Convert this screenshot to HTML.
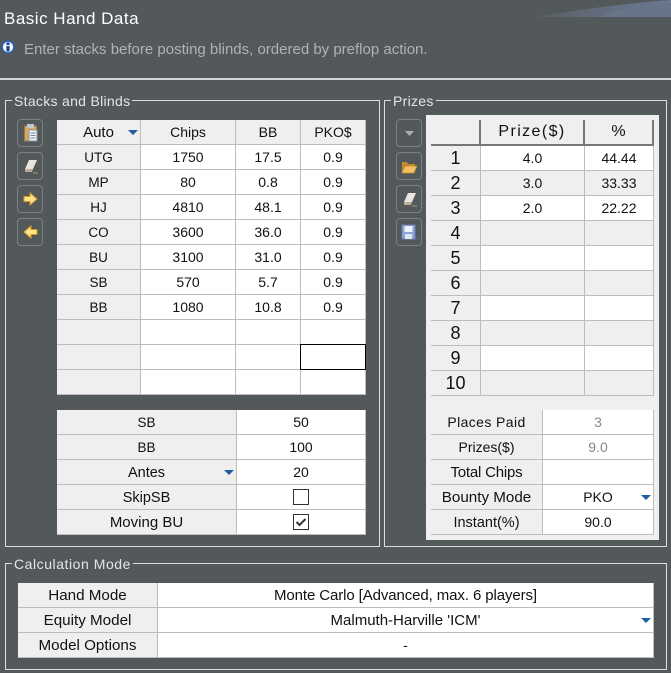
<!DOCTYPE html>
<html><head><meta charset="utf-8"><style>
*{box-sizing:border-box}
html,body{margin:0;padding:0}
body{width:671px;height:673px;background:#53585a;position:relative;overflow:hidden;font-family:"Liberation Sans",sans-serif;font-size:14px;color:#111}
.a{position:absolute}
.g{position:absolute;border:1px solid #dcdcdc}
.lg{position:absolute;background:#53585a;color:#e2e6e8;padding:0 2px 0 2px;height:18px;line-height:18px;font-size:14px;letter-spacing:.3px}
table{position:absolute;border-collapse:separate;border-spacing:0;table-layout:fixed;background:#fff}
td{height:25px;padding:0;text-align:center;border-right:1px solid #bdbdbd;border-bottom:1px solid #bdbdbd;background:#fff;font-size:14px;line-height:24px;color:#111;overflow:hidden}
td.h{background:#efefef}
td.l,td.m,td.c,td.s{line-height:22px;padding-top:2px}
td.l{font-size:15px}
td.m{font-size:15.2px}
td.c{font-size:13.5px}
td.s{font-size:14.500px}
td.n{font-size:18px;background:#efefef}
tr.alt td{background:#efefef}
td.d{color:#888}
.b{position:absolute;width:26px;height:28px;border:1px solid #7b8082;border-radius:4px}
.b svg{position:absolute;left:0;top:0}
.tri{position:absolute;width:0;height:0;border-left:5px solid transparent;border-right:5px solid transparent;border-top:5px solid #1f5f9e}
</style></head><body>
<svg class="a" style="left:530px;top:0" width="141" height="18"><defs><linearGradient id="s" x1="0" x2="1"><stop offset="0" stop-color="#5a6066"/><stop offset="1" stop-color="#6a7a94"/></linearGradient></defs><path d="M7 17 C50 9 100 3 141 0 V17Z" fill="url(#s)"/><path d="M70 17 C85 9 110 5 141 3 V17Z" fill="#687488"/></svg>
<div class="a" style="left:4px;top:9px;font-size:17px;line-height:20px;color:#fff;letter-spacing:.5px">Basic Hand Data</div>
<svg class="a" style="left:1px;top:40px" width="14" height="14"><circle cx="7" cy="7" r="6.5" fill="#1c5fb8"/><circle cx="7" cy="7" r="5.200" fill="#f0f5fc"/><rect x="5.500" y="6" width="3" height="5.500" fill="#163f80"/><rect x="5.500" y="2.500" width="3" height="2.500" fill="#163f80"/></svg>
<div class="a" style="left:24px;top:41px;font-size:15px;line-height:18px;color:#aeb3b5">Enter stacks before posting blinds, ordered by preflop action.</div>
<div class="a" style="left:0;top:78px;width:671px;height:2px;background:#d6d6d6"></div>

<div class="g" style="left:5px;top:100px;width:375px;height:447px"></div>
<div class="lg" style="left:12px;top:92px">Stacks and Blinds</div>
<div class="g" style="left:384px;top:100px;width:283px;height:447px"></div>
<div class="lg" style="left:391px;top:92px">Prizes</div>
<div class="g" style="left:5px;top:563px;width:662px;height:107px"></div>
<div class="lg" style="left:12px;top:555px;letter-spacing:.55px">Calculation Mode</div>

<div class="b" style="left:17px;top:119px"><svg width="24" height="26"><rect x="6.500" y="6" width="12" height="15" fill="#d9a860" stroke="#9a7a48"/><rect x="9" y="4" width="7" height="4" fill="#c4c8cc"/><rect x="11" y="10" width="8" height="11" fill="#eef1f5" stroke="#8a98a8"/><path d="M12.500 13h5M12.500 15.500h5M12.500 18h5" stroke="#7a8aa0"/></svg></div>
<div class="b" style="left:17px;top:152px"><svg width="24" height="26"><path d="M11 7h8l-4 9H7z" fill="#e8e4de"/><path d="M7 16h8l-1 3H7z" fill="#b9ad98"/><path d="M15 20h5" stroke="#a89878"/></svg></div>
<div class="b" style="left:17px;top:185px"><svg width="24" height="26"><path d="M6 10.500h6V7l7 6-7 6v-3.500H6z" fill="#ffe484" stroke="#d29a30"/></svg></div>
<div class="b" style="left:17px;top:218px"><svg width="24" height="26"><path d="M19 10.500h-6V7l-7 6 7 6v-3.500h6z" fill="#ffe484" stroke="#d29a30"/></svg></div>

<div class="b" style="left:396px;top:119px"><svg width="24" height="26"><path d="M8 11h9l-4.500 5z" fill="#aab0b4"/></svg></div>
<div class="b" style="left:396px;top:152px"><svg width="24" height="26"><path d="M5 9h5l1 2h7v2H9l-3 7H5z" fill="#c58a2c"/><path d="M8 13h12l-3 7H5z" fill="#f3bf66" stroke="#c58a2c" stroke-width=".7"/></svg></div>
<div class="b" style="left:396px;top:185px"><svg width="24" height="26"><path d="M11 7h8l-4 9H7z" fill="#e8e4de"/><path d="M7 16h8l-1 3H7z" fill="#b9ad98"/><path d="M15 20h5" stroke="#a89878"/></svg></div>
<div class="b" style="left:396px;top:218px"><svg width="24" height="26"><rect x="5" y="6" width="13" height="14" fill="#8aa4d8" stroke="#6a82b0"/><rect x="7.500" y="7" width="8" height="6" fill="#eef2fa"/><rect x="8" y="15" width="7" height="5" fill="#dfe5f0"/><path d="M16 20h1M18 20h1M20 20h1" stroke="#5f86c8"/></svg></div>

<table style="left:57px;top:120px;width:309px"><colgroup><col style="width:84px"><col style="width:95px"><col style="width:65px"><col style="width:65px"></colgroup>
<tr><td class="h l">Auto</td><td class="h">Chips</td><td class="h">BB</td><td class="h">PKO$</td></tr>
<tr><td class="h c">UTG</td><td>1750</td><td>17.5</td><td>0.9</td></tr>
<tr><td class="h c">MP</td><td>80</td><td>0.8</td><td>0.9</td></tr>
<tr><td class="h c">HJ</td><td>4810</td><td>48.1</td><td>0.9</td></tr>
<tr><td class="h c">CO</td><td>3600</td><td>36.0</td><td>0.9</td></tr>
<tr><td class="h c">BU</td><td>3100</td><td>31.0</td><td>0.9</td></tr>
<tr><td class="h c">SB</td><td>570</td><td>5.7</td><td>0.9</td></tr>
<tr><td class="h c">BB</td><td>1080</td><td>10.8</td><td>0.9</td></tr>
<tr><td class="h"></td><td></td><td></td><td></td></tr>
<tr><td class="h"></td><td></td><td></td><td></td></tr>
<tr><td class="h"></td><td></td><td></td><td></td></tr>
</table>
<div class="tri" style="left:128px;top:130px"></div>
<div class="a" style="left:300px;top:344px;width:66px;height:26px;border:1px solid #000"></div>

<table style="left:57px;top:410px;width:309px"><colgroup><col style="width:180px"><col style="width:129px"></colgroup>
<tr><td class="h c">SB</td><td>50</td></tr>
<tr><td class="h c">BB</td><td>100</td></tr>
<tr><td class="h s">Antes</td><td>20</td></tr>
<tr><td class="h s">SkipSB</td><td></td></tr>
<tr><td class="h l">Moving BU</td><td></td></tr>
</table>
<div class="tri" style="left:224px;top:470px"></div>
<div class="a" style="left:293px;top:489px;width:16px;height:16px;border:1px solid #333;background:#fff"></div>
<div class="a" style="left:293px;top:514px;width:16px;height:16px;border:1px solid #333;background:#fff"></div>
<svg class="a" style="left:293px;top:514px" width="16" height="16"><path d="M3.500 8l3 3 6-6" fill="none" stroke="#333" stroke-width="2"/></svg>

<div class="a" style="left:426px;top:115px;width:233px;height:425px;background:#efefef"></div>
<table style="left:431px;top:120px;width:223px;background:#efefef"><colgroup><col style="width:50px"><col style="width:104px"><col style="width:69px"></colgroup>
<tr><td class="h" style="border-right:2px solid #777;border-bottom:2px solid #777"></td><td class="h" style="border-right:2px solid #777;border-bottom:2px solid #777;font-size:16px;letter-spacing:1.4px">Prize($)</td><td class="h" style="border-right:2px solid #777;border-bottom:2px solid #777;font-size:16px">%</td></tr>
<tr><td class="n">1</td><td>4.0</td><td>44.44</td></tr>
<tr class="alt"><td class="n">2</td><td>3.0</td><td>33.33</td></tr>
<tr><td class="n">3</td><td>2.0</td><td>22.22</td></tr>
<tr class="alt"><td class="n">4</td><td></td><td></td></tr>
<tr><td class="n">5</td><td></td><td></td></tr>
<tr class="alt"><td class="n">6</td><td></td><td></td></tr>
<tr><td class="n">7</td><td></td><td></td></tr>
<tr class="alt"><td class="n">8</td><td></td><td></td></tr>
<tr><td class="n">9</td><td></td><td></td></tr>
<tr class="alt"><td class="n">10</td><td></td><td></td></tr>
</table>
<table style="left:431px;top:410px;width:223px"><colgroup><col style="width:112px"><col style="width:111px"></colgroup>
<tr><td class="h" style="letter-spacing:.4px">Places Paid</td><td class="d">3</td></tr>
<tr><td class="h">Prizes($)</td><td class="d">9.0</td></tr>
<tr><td class="h l" style="letter-spacing:-.2px">Total Chips</td><td></td></tr>
<tr><td class="h m">Bounty Mode</td><td>PKO</td></tr>
<tr><td class="h s">Instant(%)</td><td>90.0</td></tr>
</table>
<div class="tri" style="left:641px;top:495px"></div>

<table style="left:18px;top:583px;width:636px"><colgroup><col style="width:140px"><col style="width:496px"></colgroup>
<tr><td class="h m">Hand Mode</td><td class="l" style="letter-spacing:-.1px">Monte Carlo [Advanced, max. 6 players]</td></tr>
<tr><td class="h m">Equity Model</td><td class="l">Malmuth-Harville 'ICM'</td></tr>
<tr><td class="h m">Model Options</td><td>-</td></tr>
</table>
<div class="tri" style="left:641px;top:618px"></div>
</body></html>
